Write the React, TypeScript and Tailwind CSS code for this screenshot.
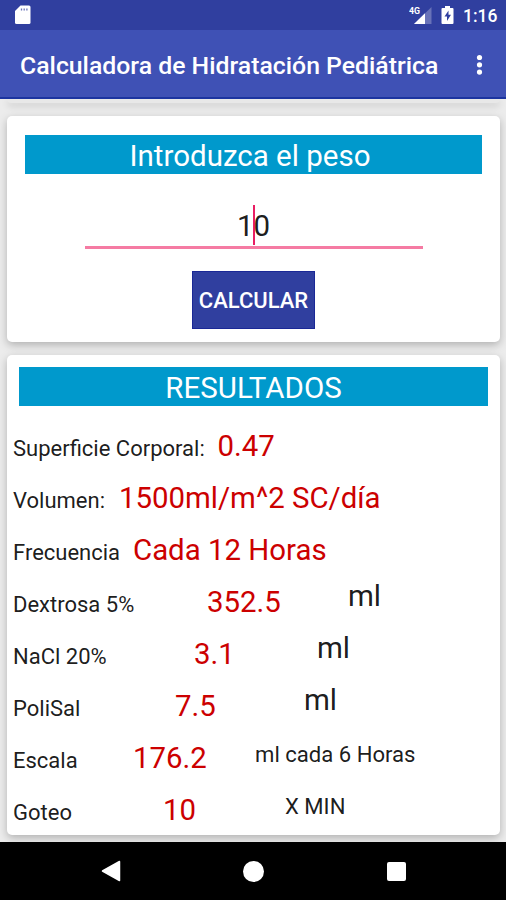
type Result = {
  label: string;
  value: string;
  unit?: string;
  labelClass: string;
  valueClass?: string;
  unitClass?: string;
};

const results: Result[] = [
  { label: "Superficie Corporal:", value: "0.47", labelClass: "w-[204.5px]" },
  { label: "Volumen:", value: "1500ml/m^2 SC/día", labelClass: "w-[106px]" },
  { label: "Frecuencia", value: "Cada 12 Horas", labelClass: "w-[120px]" },
  { label: "Dextrosa 5%", value: "352.5", unit: "ml", labelClass: "w-[194px]", valueClass: "w-[141px]", unitClass: "text-[29.5px]" },
  { label: "NaCl 20%", value: "3.1", unit: "ml", labelClass: "w-[181px]", valueClass: "w-[123px]", unitClass: "text-[29.5px]" },
  { label: "PoliSal", value: "7.5", unit: "ml", labelClass: "w-[162px]", valueClass: "w-[129px]", unitClass: "text-[29.5px]" },
  { label: "Escala", value: "176.2", unit: "ml cada 6 Horas", labelClass: "w-[120px]", valueClass: "w-[122px]", unitClass: "text-[22.1px]" },
  { label: "Goteo", value: "10", unit: "X MIN", labelClass: "w-[150px]", valueClass: "w-[122px]", unitClass: "text-[22.1px]" },
];

function StatusBar() {
  return (
    <div className="flex h-[30px] shrink-0 items-center bg-[#303f9f] text-white">
      <svg className="ml-[14px] h-[20px] w-[17px]" viewBox="0 0 17 20">
        <path d="M6.500 0.500H15a1.500 1.500 0 0 1 1.500 1.500v15.500a1.500 1.500 0 0 1-1.500 1.500H2.500A1.500 1.500 0 0 1 1 17.500V6z" fill="#fff" />
        <path d="M7.500 3.500v2M10.200 3.500v2M12.900 3.500v2" stroke="#6b74b8" strokeWidth="1.300" />
      </svg>
      <div className="ml-auto flex items-center">
        <svg className="h-[20px] w-[24px]" viewBox="0 0 24 20">
          <path d="M22.500 2v17H5z" fill="#6872b8" />
          <path d="M16 8.300V19H5z" fill="#fff" />
          <text x="0" y="8.800" fontSize="9.500" fontWeight="700" fill="#fff" fontFamily="Roboto, sans-serif" textLength="11" lengthAdjust="spacingAndGlyphs">4G</text>
        </svg>
        <svg className="ml-[8px] h-[20px] w-[13px]" viewBox="0 0 13 20">
          <path d="M4 1h5v2h2.500a1 1 0 0 1 1 1v14a1 1 0 0 1-1 1h-10a1 1 0 0 1-1-1V4a1 1 0 0 1 1-1H4z" fill="#fff" />
          <path d="M7.500 5.500L3.500 11.500H6V16l4-6.200H7.500z" fill="#303f9f" />
        </svg>
        <span className="mr-[9px] ml-[9px] w-[34px] pt-px text-[17.5px] leading-[30px] font-medium whitespace-nowrap">1:16</span>
      </div>
    </div>
  );
}

function Toolbar() {
  return (
    <div className="z-10 flex h-[69px] shrink-0 items-center justify-between border-b-2 border-[#1c34a0] bg-[#3f51b5] pt-[3px] pr-[23px] pl-5 text-white">
      <h1 className="pt-px text-[24.8px] font-medium whitespace-nowrap">Calculadora de Hidratación Pediátrica</h1>
      <svg className="h-[22px] w-[7px]" viewBox="0 0 7 22">
        <circle cx="3.500" cy="3.500" r="2.600" fill="#fff" />
        <circle cx="3.500" cy="10.800" r="2.600" fill="#fff" />
        <circle cx="3.500" cy="18.100" r="2.600" fill="#fff" />
      </svg>
    </div>
  );
}

function WeightCard() {
  return (
    <section className="mt-[13px] flex h-[226px] shrink-0 flex-col items-center rounded-[5px] bg-white pt-[19px] shadow-[0_3px_9px_rgba(0,0,0,0.25)]">
      <h2 className="h-[39px] w-[457px] bg-[#0099cc] pr-[7px] text-center text-[29.5px] leading-[43px] text-white">Introduzca el peso</h2>
      <div className="mt-[27px] flex h-[48px] w-[338px] justify-center border-b-[3px] border-[#f57ba3] text-[29.5px] leading-[51px] text-black/90">
        <span>1</span>
        <span className="-mx-px mt-[4px] h-[40px] w-[2px] bg-[#e91e63]" />
        <span>0</span>
      </div>
      <button className="mt-[22px] h-[58px] w-[123px] border border-[#1a2896] bg-[#303f9f] text-[22px] leading-[58px] font-medium whitespace-nowrap text-white">
        CALCULAR
      </button>
    </section>
  );
}

function ResultRow({ row }: { row: Result }) {
  return (
    <div className="flex h-[52px] items-baseline whitespace-nowrap text-black/90">
      <span className={`${row.labelClass} shrink-0 text-[22px]`}>{row.label}</span>
      <span className={`${row.valueClass ?? ""} shrink-0 text-[29.4px] leading-[52px] text-[#cc0000]`}>{row.value}</span>
      {row.unit && <span className={`${row.unitClass} -translate-y-1.5`}>{row.unit}</span>}
    </div>
  );
}

function ResultsCard() {
  return (
    <section className="mt-[13px] h-[480px] shrink-0 rounded-[5px] bg-white pt-[12px] shadow-[0_3px_9px_rgba(0,0,0,0.25)]">
      <h2 className="mx-3 h-[39px] bg-[#0099cc] text-center text-[29.5px] leading-[43px] text-white">RESULTADOS</h2>
      <div className="mt-[14px] pl-[6px]">
        {results.map((row) => (
          <ResultRow key={row.label} row={row} />
        ))}
      </div>
    </section>
  );
}

function NavigationBar() {
  return (
    <div className="z-10 flex h-[58px] shrink-0 items-center justify-between bg-black pr-[100px] pl-[101px]">
      <svg className="h-[22px] w-[20px]" viewBox="0 0 20 22">
        <path d="M18.500 1.500v19L1.500 11z" fill="#fff" stroke="#fff" strokeWidth="1.500" strokeLinejoin="round" />
      </svg>
      <div className="mr-[2px] size-[21px] rounded-full bg-white" />
      <div className="size-[19px] rounded-[2px] bg-white" />
    </div>
  );
}

export default function App() {
  return (
    <div className="flex h-[900px] w-[506px] flex-col overflow-hidden bg-[#ececec] font-[Roboto,sans-serif]">
      <StatusBar />
      <Toolbar />
      <main className="flex h-[743px] shrink-0 flex-col overflow-hidden pr-[6px] pl-[7px]">
        <div className="h-[4px] shrink-0 rounded-b-[4px] bg-[#e8e8e8] shadow-[0_3px_7px_rgba(0,0,0,0.16)]" />
        <WeightCard />
        <ResultsCard />
      </main>
      <NavigationBar />
    </div>
  );
}
